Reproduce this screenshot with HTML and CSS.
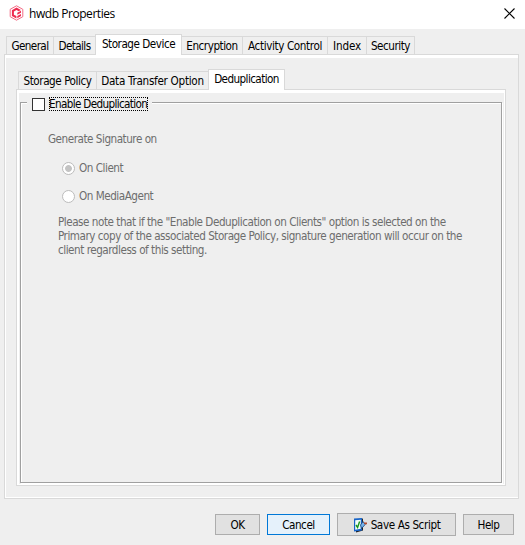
FILE: index.html
```html
<!DOCTYPE html>
<html lang="en">
<head>
<meta charset="utf-8">
<title>hwdb Properties</title>
<link rel="stylesheet" href="styles.css">
</head>
<body>
<div class="window">
  <header class="titlebar">
    <svg class="app-icon" width="15" height="16" viewBox="0 0 15 16">
      <path d="M7.5 .8 13.8 4.3v7.4L7.5 15.2 1.2 11.7V4.3z" fill="#fff" stroke="#f36b85" stroke-width="1"/>
      <path d="M7.5 2.6 11.8 5 9.7 6.2 7.5 5 4.9 6.5v3.2l2.5 1.4v2.5L2.9 11V5.2z" fill="#ee2b50"/>
      <path d="M8.3 7.8 12 5.8v1.9L8.3 9.8zM8.3 11l3.7-2v2l-3.7 2.3z" fill="#ee2b50"/>
    </svg>
    <h1 class="title">hwdb Properties</h1>
    <svg class="close" width="11" height="11" viewBox="0 0 11 11"><path d="M.5.5l10 10M10.5.5l-10 10" stroke="#000" stroke-width="1.1"/></svg>
  </header>
  <main class="content">
    <nav class="tabs outer-tabs">
      <div class="tab w-general"><span>General</span></div>
      <div class="tab w-details"><span>Details</span></div>
      <div class="tab w-storage active"><span>Storage Device</span></div>
      <div class="tab w-encryption"><span>Encryption</span></div>
      <div class="tab w-activity"><span>Activity Control</span></div>
      <div class="tab w-index"><span>Index</span></div>
      <div class="tab w-security"><span>Security</span></div>
    </nav>
    <section class="panel outer-panel">
      <nav class="tabs inner-tabs">
        <div class="tab w-policy"><span>Storage Policy</span></div>
        <div class="tab w-transfer"><span>Data Transfer Option</span></div>
        <div class="tab w-dedup active"><span>Deduplication</span></div>
      </nav>
      <section class="panel inner-panel">
        <div class="group">
          <label class="legend"><i class="checkbox"></i><span class="focus">Enable Deduplication</span></label>
          <div class="settings">
            <p class="heading"><span>Generate Signature on</span></p>
            <label class="option"><i class="radio checked"></i><span>On Client</span></label>
            <label class="option"><i class="radio"></i><span>On MediaAgent</span></label>
            <p class="note"><span>Please note that if the "Enable Deduplication on Clients" option is selected on the</span><br><span>Primary copy of the associated Storage Policy, signature generation will occur on the</span><br><span>client regardless of this setting.</span></p>
          </div>
        </div>
      </section>
    </section>
    <footer class="buttons">
      <div class="button b-ok"><span>OK</span></div>
      <div class="button b-cancel"><span>Cancel</span></div>
      <div class="button b-save">
        <svg width="15" height="16" viewBox="0 0 15 16">
          <path d="M3 2.5 10 1.5v12l-7 2z" fill="#222"/>
          <path d="M1 1.5 9 1v12.5L1 14.5z" fill="#1764c8"/>
          <path d="M2.2 3.3 7.8 2.8v9l-5.6 1z" fill="#f4fff8"/>
          <path d="M3 8l1.6 2.5L6.6 4.5" fill="none" stroke="#15951c" stroke-width="1.4"/>
          <path d="M7.5 8l2.5-3.5 2.2 3-3.7 4z" fill="#75b4ee" stroke="#163e70" stroke-width=".8"/>
          <path d="M10.5 5.5h3.5v1.8h-2.5z" fill="#b34a2d"/>
        </svg>
        <span>Save As Script</span>
      </div>
      <div class="button b-help"><span>Help</span></div>
    </footer>
  </main>
</div>
</body>
</html>
```
FILE: styles.css
```css
* { box-sizing: border-box; }
body {
  margin: 0;
  font: 11.6px/14px "DejaVu Sans Condensed", "DejaVu Sans", sans-serif;
  font-stretch: condensed;
  letter-spacing: -0.47px;
  color: #000;
  background: #efefef;
}
p, h1 { margin: 0; font-weight: normal; }
span { white-space: nowrap; }
.window { width: 525px; height: 545px; background: #efefef; overflow: hidden; }
.titlebar { height: 29px; background: #fff; display: flex; align-items: flex-start; padding: 5px 10px 0 9px; }
.title { font: 12px/16px "Open Sans", "Noto Sans", sans-serif; letter-spacing: -0.45px; margin: 1px 0 0 5px; }
.close { margin: 3px 0 0 auto; }
.content { padding: 5px 6px 0 4px; }
.tabs { display: flex; align-items: flex-end; position: relative; z-index: 1; }
.outer-tabs { height: 20px; padding-left: 2px; }
.inner-tabs { height: 20px; padding-left: 2px; }
.tab { height: 18px; border: 1px solid #d9d9d9; border-left-width: 0; border-bottom: 0; display: flex; justify-content: center; padding-top: 2px; flex: none; }
.tab:first-child { border-left-width: 1px; }
.tab.active { height: 21px; margin-bottom: -1px; background: #fff; border-left-width: 1px; margin-left: -1px; }
.w-general { width: 48px; letter-spacing: -0.6px; }
.w-details { width: 42px; letter-spacing: -0.6px; }
.w-storage { width: 87px; }
.w-encryption { width: 61px; }
.w-activity { width: 85px; letter-spacing: -0.38px; }
.w-index { width: 39px; letter-spacing: -0.15px; }
.w-security { width: 48px; }
.w-policy { width: 79px; letter-spacing: -0.44px; }
.w-transfer { width: 112px; letter-spacing: -0.28px; }
.w-dedup { width: 77px; letter-spacing: -0.58px; }
.panel { border: 1px solid #d9d9d9; }
.outer-panel { width: 515px; height: 445px; padding: 14px 12px 0 11px; box-shadow: inset 0 3px #fff, inset 1px 0 #fff, inset 0 -1px #fff; }
.inner-panel { width: 490px; height: 397px; padding: 12px 3px 0; box-shadow: inset 0 3px #fff, inset 2px 0 #fff, inset -1px -1px #fff; }
.group { width: 482px; height: 381px; border: 1px solid #a0a0a0; box-shadow: inset 1px 1px #fff, 1px 1px #fff; }
.legend { display: flex; width: 125px; height: 15px; margin: -6px 0 0 6px; padding-left: 5px; background: #efefef; align-items: flex-start; }
.checkbox { width: 13px; height: 13px; margin-top: 1px; border: 1px solid #333; background: #fff; flex: none; }
.focus { width: 99px; height: 14px; margin-left: 4px; outline: 1px dotted #000; outline-offset: -1px; letter-spacing: -0.64px; }
.settings { color: #6d6d6d; padding: 20px 0 0 27px; }
.heading { height: 29px; }
.option { display: flex; height: 28px; margin-left: 14px; align-items: flex-start; }
.radio { width: 13px; height: 13px; margin: 1px 4px 0 0; border: 1px solid #bcbcbc; border-radius: 50%; background: #fff; flex: none; }
.checked { background: radial-gradient(circle, #c3c3c3 0 3px, #fff 3.8px); }
.note { margin: -2px 0 0 10px; }
.buttons { display: flex; align-items: center; height: 23px; margin: 14px 0 0 211px; }
.button { height: 21px; border: 1px solid #adadad; background: #e1e1e1; display: flex; align-items: center; justify-content: center; flex: none; }
.b-ok { width: 45px; }
.b-cancel { width: 63px; margin-left: 7px; border-color: #0078d7; background: #e5f1fb; }
.b-save { width: 119px; height: 23px; margin-left: 7px; gap: 3px; letter-spacing: -0.38px; }
.b-help { width: 51px; margin-left: 7px; }
```
